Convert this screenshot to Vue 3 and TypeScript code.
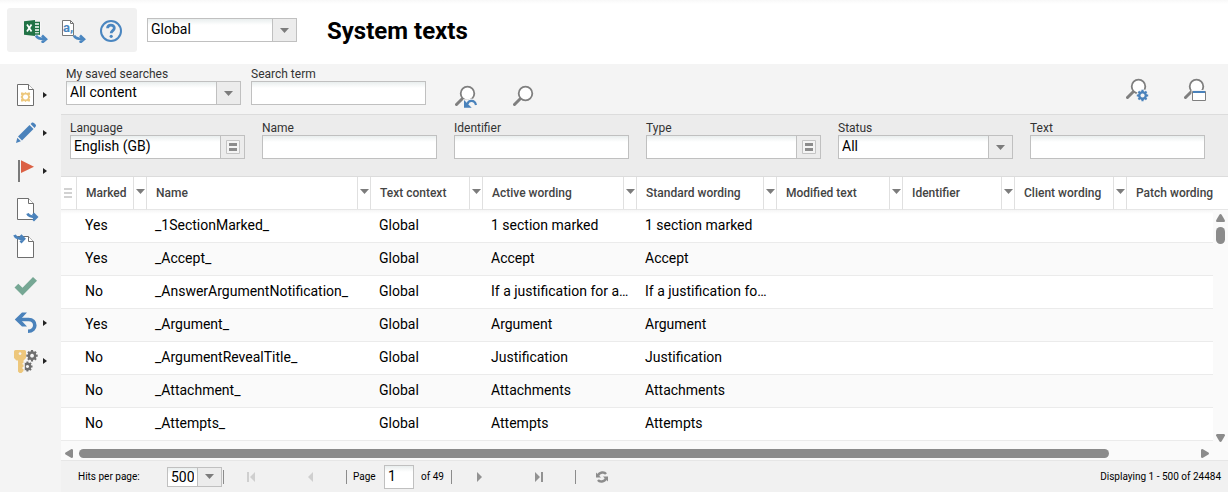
<script setup lang="ts">
import { ref } from 'vue'

interface Column { label: string; width: string; menu: boolean }
interface Row { marked: string; name: string; context: string; active: string; standard: string }
interface Filter { id: string; label: string; kind: 'text' | 'list' | 'select'; value: string }
interface Tool { icon: string; label: string; menu: boolean }

const columns: Column[] = [
  { label: 'Marked', width: 'w70', menu: true },
  { label: 'Name', width: 'w224', menu: true },
  { label: 'Text context', width: 'w112', menu: true },
  { label: 'Active wording', width: 'w154', menu: true },
  { label: 'Standard wording', width: 'w140', menu: true },
  { label: 'Modified text', width: 'w126', menu: true },
  { label: 'Identifier', width: 'w112', menu: true },
  { label: 'Client wording', width: 'w112', menu: true },
  { label: 'Patch wording', width: 'rest', menu: false },
]

const rows: Row[] = [
  { marked: 'Yes', name: '_1SectionMarked_', context: 'Global', active: '1 section marked', standard: '1 section marked' },
  { marked: 'Yes', name: '_Accept_', context: 'Global', active: 'Accept', standard: 'Accept' },
  { marked: 'No', name: '_AnswerArgumentNotification_', context: 'Global', active: 'If a justification for a…', standard: 'If a justification fo…' },
  { marked: 'Yes', name: '_Argument_', context: 'Global', active: 'Argument', standard: 'Argument' },
  { marked: 'No', name: '_ArgumentRevealTitle_', context: 'Global', active: 'Justification', standard: 'Justification' },
  { marked: 'No', name: '_Attachment_', context: 'Global', active: 'Attachments', standard: 'Attachments' },
  { marked: 'No', name: '_Attempts_', context: 'Global', active: 'Attempts', standard: 'Attempts' },
]

const filters = ref<Filter[]>([
  { id: 'language', label: 'Language', kind: 'list', value: 'English (GB)' },
  { id: 'name', label: 'Name', kind: 'text', value: '' },
  { id: 'identifier', label: 'Identifier', kind: 'text', value: '' },
  { id: 'type', label: 'Type', kind: 'list', value: '' },
  { id: 'status', label: 'Status', kind: 'select', value: 'All' },
  { id: 'text', label: 'Text', kind: 'text', value: '' },
])

const tools: Tool[] = [
  { icon: 'new', label: 'New', menu: true },
  { icon: 'edit', label: 'Edit', menu: true },
  { icon: 'flag', label: 'Mark', menu: true },
  { icon: 'export', label: 'Export', menu: false },
  { icon: 'import', label: 'Import', menu: false },
  { icon: 'check', label: 'Apply', menu: false },
  { icon: 'undo', label: 'Undo', menu: true },
  { icon: 'keys', label: 'Permissions', menu: true },
]

const searchTerm = ref('')
const page = ref('1')

// Outline of a cog wheel with square teeth around (cx, cy).
function cog(cx: number, cy: number, outer: number, inner: number, teeth = 8): string {
  const step = (Math.PI * 2) / teeth
  const points: string[] = []
  for (let i = 0; i < teeth; i++) {
    const a = i * step
    const corners: [number, number][] = [[inner, -0.3], [outer, -0.24], [outer, 0.24], [inner, 0.3]]
    for (const [r, k] of corners) {
      points.push(`${(cx + r * Math.cos(a + k * step)).toFixed(2)} ${(cy + r * Math.sin(a + k * step)).toFixed(2)}`)
    }
  }
  return `M${points.join('L')}Z`
}
</script>

<template>
  <div class="page">
    <header class="top">
      <div class="actions">
        <button type="button" class="icon-btn" aria-label="Export to Excel">
          <svg viewBox="0 0 24 24">
            <path d="M10 3H16.5V15.5H10Z" fill="#fff" />
            <path d="M11 3.5H16M11 6.5H16M11 9.5H16M11 12.5H16M11 15H16" stroke="#217346" stroke-width="1.6" />
            <path d="M15.5 3V15.5" stroke="#217346" />
            <path d="M0 2.2L11 1V17L0 15.8Z" fill="#217346" />
            <path d="M3 5.5L7.5 12.5M7.5 5.5L3 12.5" stroke="#fff" stroke-width="1.7" />
            <path d="M12 16.5C13 19.5 16 20.2 22 20.2M18 16.5L22 20.2L17.8 23.8" fill="none" stroke="#4a86c0" stroke-width="2.6" />
          </svg>
        </button>
        <button type="button" class="icon-btn" aria-label="Export as CSV">
          <svg viewBox="0 0 24 24">
            <path d="M.5 1.5H8.5L11.5 4.5V16.5H.5Z" fill="#fff" stroke="#777" />
            <path d="M8.5 1.5V4.5H11.5" fill="none" stroke="#777" />
            <text x="1" y="13" font-family="Roboto, sans-serif" font-size="13" font-weight="700" fill="#4a86c0">a,</text>
            <path d="M12 16.5C13 19.5 16 20.2 22 20.2M18 16.5L22 20.2L17.8 23.8" fill="none" stroke="#4a86c0" stroke-width="2.6" />
          </svg>
        </button>
        <button type="button" class="icon-btn" aria-label="Help">
          <svg viewBox="0 0 24 24">
            <circle cx="11" cy="12" r="10" fill="none" stroke="#4a86c0" stroke-width="2" />
            <path d="M7.6 9.3C7.6 5 14.3 5.2 14.3 9C14.3 11.6 11.2 11.6 11.2 14.3" fill="none" stroke="#4a86c0" stroke-width="2.8" />
            <circle cx="11.2" cy="17.3" r="1.6" fill="#4a86c0" />
          </svg>
        </button>
      </div>
      <div class="control scope">
        <select aria-label="Text context"><option>Global</option></select>
        <span class="end"><svg class="tri" viewBox="0 0 9 5"><path d="M0 0H9L4.5 5Z" /></svg></span>
      </div>
      <h1>System texts</h1>
    </header>

    <div class="body">
      <nav class="side" aria-label="Tools">
        <button v-for="t in tools" :key="t.icon" type="button" class="tool" :aria-label="t.label">
          <svg class="tool-icon" viewBox="0 0 24 24">
            <template v-if="t.icon === 'new' || t.icon === 'export' || t.icon === 'import'">
              <path d="M3.5 1.5H14.5L19.5 6.5V22.5H3.5Z" fill="#fff" stroke="#6e6e6e" />
              <path d="M14.5 1.5V6.5H19.5" fill="#fff" stroke="#6e6e6e" />
            </template>
            <path
              v-if="t.icon === 'new'"
              fill-rule="evenodd"
              d="M7 9.5H9L10 10.2L11.5 9L13 10.2L14 9.5H16V11.5L15.3 12.5L16.5 14L15.3 15.5L16 16.5V18.5H14L13 17.8L11.5 19L10 17.8L9 18.5H7V16.5L7.7 15.5L6.5 14L7.7 12.5L7 11.5ZM11.5 11.4A2.6 2.6 0 1 0 11.6 11.4Z"
              fill="#edc77c"
            />
            <path v-if="t.icon === 'export'" d="M13.5 16.5C14.5 19 17 20 22.5 20M19 16.5L22.5 20L19 23.5" fill="none" stroke="#4a82bb" stroke-width="2.8" />
            <path v-if="t.icon === 'import'" d="M.5 0C1.5 2.5 4 3.8 10 3.8M6.5 .2L10 3.8L6.5 7.5" fill="none" stroke="#4a82bb" stroke-width="2.8" />
            <g v-if="t.icon === 'edit'" fill="#4a82bb">
              <path d="M4 15.5L15.5 4L19.5 8L8 19.5Z" />
              <path d="M16.6 3L18 1.6Q19 1 20 2L21.6 3.6Q22.4 4.6 21.7 5.6L20.5 6.9Z" />
              <path d="M3.3 16.8L6.9 20.3L2 22Z" />
            </g>
            <g v-if="t.icon === 'flag'">
              <path d="M4 1H6V23H4Z" fill="#7a7a7a" />
              <path d="M7 1.2L20 7.8L7 14Z" fill="#db6044" />
            </g>
            <path v-if="t.icon === 'check'" d="M.5 14.5L4.3 10.7L8.5 14.8L19 4L23 7.8L8.5 22.5Z" fill="#76a794" />
            <g v-if="t.icon === 'undo'">
              <path d="M4 8.5H14.5C23 8.5 23 20.3 14 20.3" fill="none" stroke="#4a82bb" stroke-width="3.6" />
              <path d="M.8 8.5L8 1.5H13L6.4 8.5L13 15.5H8Z" fill="#4a82bb" />
            </g>
            <g v-if="t.icon === 'keys'">
              <path fill-rule="evenodd" :d="cog(18, 6.7, 5.8, 4.5) + 'M18 4.8A1.9 1.9 0 1 0 18.1 4.8Z'" fill="#6e6e6e" />
              <path fill-rule="evenodd" :d="cog(13.4, 17.5, 5.2, 4) + 'M13.4 15.9A1.6 1.6 0 1 0 13.5 15.9Z'" fill="#6e6e6e" />
              <path d="M8 11.5H10.8V24H8Z" fill="#f4f4f4" />
              <path fill-rule="evenodd" fill="#edc77c" d="M1.5 1H10.5Q12 1 12 2.5V9L9.5 11.5V14H8.5V15.5H9.5V18H8.5V20H9.5V22L7.5 24H5.5L4 22.5V11.5H2.5L0 9V2.5Q0 1 1.5 1ZM6 3.2A1.4 1.4 0 1 0 6.1 3.2Z" />
            </g>
          </svg>
          <svg v-if="t.menu" class="more" viewBox="0 0 4 6"><path d="M0 0L4 3L0 6Z" fill="#222" /></svg>
        </button>
      </nav>

      <main class="main">
        <form class="search" @submit.prevent>
          <div class="field">
            <label for="saved">My saved searches</label>
            <div class="control">
              <select id="saved"><option>All content</option></select>
              <span class="end"><svg class="tri" viewBox="0 0 9 5"><path d="M0 0H9L4.5 5Z" /></svg></span>
            </div>
          </div>
          <div class="field">
            <label for="term">Search term</label>
            <div class="control"><input id="term" v-model="searchTerm" type="text"></div>
          </div>
          <div class="search-actions run">
            <button type="button" class="icon-btn" aria-label="Reset search">
              <svg viewBox="0 0 24 24">
                <path d="M7.5 13.5L1.5 19.5" stroke="#7f7f7f" stroke-width="3" stroke-linecap="round" />
                <circle cx="12.5" cy="8.5" r="6.8" fill="#fff" stroke="#7f7f7f" stroke-width="1.8" />
                <path d="M8.2 14.2H13.5C17 12.5 20 14 22.5 19V23H8.2Z" fill="#f4f4f4" />
                <path d="M12.5 19C13.5 15 19.5 14.5 21 20" fill="none" stroke="#4a82bb" stroke-width="2.2" />
                <path d="M9 15V22.7H16.7Z" fill="#4a82bb" />
              </svg>
            </button>
            <button type="submit" class="icon-btn" aria-label="Search">
              <svg viewBox="0 0 24 24">
                <path d="M7.5 13.5L1.5 19.5" stroke="#7f7f7f" stroke-width="3" stroke-linecap="round" />
                <circle cx="12.5" cy="8.5" r="6.8" fill="#fff" stroke="#7f7f7f" stroke-width="1.8" />
              </svg>
            </button>
          </div>
          <div class="search-actions setup">
            <button type="button" class="icon-btn" aria-label="Search settings">
              <svg viewBox="0 0 24 24">
                <path d="M7.5 13.5L1.5 19.5" stroke="#7f7f7f" stroke-width="3" stroke-linecap="round" />
                <circle cx="12.5" cy="8.5" r="6.8" fill="#fff" stroke="#7f7f7f" stroke-width="1.8" />
                <circle cx="16.5" cy="17.5" r="6.2" fill="#f4f4f4" />
                <path fill-rule="evenodd" :d="cog(16.5, 17.5, 5.8, 4.5) + 'M16.5 15.4A2.1 2.1 0 1 0 16.6 15.4Z'" fill="#4a82bb" />
              </svg>
            </button>
            <button type="button" class="icon-btn" aria-label="Search window">
              <svg viewBox="0 0 24 24">
                <path d="M7.5 13.5L1.5 19.5" stroke="#7f7f7f" stroke-width="3" stroke-linecap="round" />
                <circle cx="12.5" cy="8.5" r="6.8" fill="#fff" stroke="#7f7f7f" stroke-width="1.8" />
                <path d="M7.5 12H23V23H7.5Z" fill="#f4f4f4" />
                <path d="M8.5 13.5H21.5V22.5H8.5Z" fill="#fff" stroke="#7f7f7f" />
                <path d="M9 14H21" stroke="#4a82bb" stroke-width="2" />
              </svg>
            </button>
          </div>
        </form>

        <div class="filters">
          <div v-for="f in filters" :key="f.id" class="field">
            <label :for="f.id">{{ f.label }}</label>
            <div class="control">
              <select v-if="f.kind === 'select'" :id="f.id"><option>{{ f.value }}</option></select>
              <input v-else :id="f.id" v-model="f.value" type="text">
              <span v-if="f.kind === 'select'" class="end"><svg class="tri" viewBox="0 0 9 5"><path d="M0 0H9L4.5 5Z" /></svg></span>
              <button v-if="f.kind === 'list'" type="button" class="end pick" :aria-label="'Choose ' + f.label">
                <svg viewBox="0 0 14 14">
                  <path d="M.5 .5H13.5V13.5H.5Z" fill="#f4f4f4" stroke="#c4c4c4" />
                  <path d="M3 3H11V6H3ZM3 8H11V11H3Z" fill="#8c8c8c" />
                </svg>
              </button>
            </div>
          </div>
        </div>

        <div class="grid">
          <table>
            <colgroup>
              <col class="w16">
              <col v-for="c in columns" :key="c.label" :class="c.width">
            </colgroup>
            <thead>
              <tr>
                <th class="grip">
                  <button type="button" aria-label="Columns">
                    <svg viewBox="0 0 8 10"><path d="M0 1H8M0 5H8M0 9H8" stroke="#d2d2d2" stroke-width="2" /></svg>
                  </button>
                </th>
                <th v-for="c in columns" :key="c.label" scope="col" :class="{ last: !c.menu }">
                  <div class="head">
                    <span>{{ c.label }}</span>
                    <button v-if="c.menu" type="button" :aria-label="c.label + ' menu'">
                      <svg class="tri" viewBox="0 0 9 5"><path d="M0 0H9L4.5 5Z" /></svg>
                    </button>
                  </div>
                </th>
              </tr>
            </thead>
            <tbody>
              <tr v-for="r in rows" :key="r.name">
                <td></td>
                <td>{{ r.marked }}</td>
                <td>{{ r.name }}</td>
                <td>{{ r.context }}</td>
                <td>{{ r.active }}</td>
                <td>{{ r.standard }}</td>
                <td></td>
                <td></td>
                <td></td>
                <td></td>
              </tr>
            </tbody>
          </table>
          <div class="vbar" aria-hidden="true">
            <svg viewBox="0 0 9 8"><path d="M4.5 0Q5.2 0 5.8 1L9 6.5Q9 8 8 8H1Q0 8 0 6.5L3.2 1Q3.8 0 4.5 0Z" /></svg>
            <span class="vthumb"></span>
            <svg class="down" viewBox="0 0 9 8"><path d="M4.5 8Q5.2 8 5.8 7L9 1.5Q9 0 8 0H1Q0 0 0 1.5L3.2 7Q3.8 8 4.5 8Z" /></svg>
          </div>
        </div>
        <div class="hbar" aria-hidden="true">
          <svg viewBox="0 0 8 9"><path d="M0 4.5Q0 3.8 1 3.2L6.5 0Q8 0 8 1V8Q8 9 6.5 9L1 5.8Q0 5.2 0 4.5Z" /></svg>
          <span class="track"><span class="hthumb"></span></span>
          <svg viewBox="0 0 8 9"><path d="M8 4.5Q8 3.8 7 3.2L1.5 0Q0 0 0 1V8Q0 9 1.5 9L7 5.8Q8 5.2 8 4.5Z" /></svg>
        </div>

        <footer class="pager">
          <label class="hits" for="hits">Hits per page:</label>
          <div class="control small">
            <select id="hits"><option>500</option></select>
            <span class="end"><svg class="tri" viewBox="0 0 9 5"><path d="M0 0H9L4.5 5Z" /></svg></span>
          </div>
          <span class="bar"></span>
          <div class="pair">
            <button type="button" class="step" disabled aria-label="First page">
              <svg viewBox="0 0 10 10"><path d="M1 0H3V10H1ZM9 0V10L4 5Z" fill="#cfcfcf" /></svg>
            </button>
            <button type="button" class="step" disabled aria-label="Previous page">
              <svg viewBox="0 0 10 10"><path d="M7 0V10L2 5Z" fill="#cfcfcf" /></svg>
            </button>
          </div>
          <span class="bar"></span>
          <label class="page-label" for="page">Page</label>
          <div class="control number"><input id="page" v-model="page" type="text"></div>
          <span class="of">of 49</span>
          <span class="bar"></span>
          <div class="pair next">
            <button type="button" class="step" aria-label="Next page">
              <svg viewBox="0 0 10 10"><path d="M2 0V10L7 5Z" fill="#929292" /></svg>
            </button>
            <button type="button" class="step" aria-label="Last page">
              <svg viewBox="0 0 10 10"><path d="M1 0V10L6 5ZM7 0H9V10H7Z" fill="#929292" /></svg>
            </button>
          </div>
          <span class="bar"></span>
          <button type="button" class="reload" aria-label="Refresh">
            <svg viewBox="0 0 12 12">
              <path d="M2 4.5C3.5 .8 8.5 .8 10 3M10 7.5C8.5 11.2 3.5 11.2 2 9" fill="none" stroke="#8c8c8c" stroke-width="2.4" />
              <path d="M0 1.5V6.5H5ZM12 10.5V5.5H7Z" fill="#8c8c8c" />
            </svg>
          </button>
          <span class="status">Displaying 1 - 500 of 24484</span>
        </footer>
      </main>
    </div>
  </div>
</template>

<style>
html, body { background: #f4f4f4; }
</style>

<style scoped>
.page, .page * { box-sizing: border-box; }
.page {
  display: flex;
  flex-direction: column;
  min-height: 100vh;
  font-family: Roboto, "Liberation Sans", sans-serif;
  font-size: 14px;
  color: #000;
}
button, input, select { font: inherit; color: inherit; margin: 0; padding: 0; border: 0; background: none; border-radius: 0; }
button { display: flex; align-items: center; justify-content: center; }
svg { display: block; flex: none; }

.top {
  display: flex;
  align-items: center;
  height: 64px;
  padding: 0 7px 4px;
  background: linear-gradient(#f8f8f8, #fff 4px);
}
.actions { display: flex; gap: 14px; padding: 11px 13px 9px 17px; background: #f1f1f1; border-radius: 3px; }
.icon-btn, .icon-btn svg { width: 24px; height: 24px; }
.scope { margin: 0 30px 0 10px; width: 150px; }
h1 { margin: 0; padding-top: 2px; font-size: 24px; line-height: 32px; font-weight: 700; }

.control {
  display: flex;
  height: 24px;
  border: 1px solid #c0c0c0;
  background: linear-gradient(#e9eeee, #fff 6px);
}
.control input, .control select {
  flex: 1;
  min-width: 0;
  width: 100%;
  height: 20px;
  padding: 0 3px;
  line-height: 20px;
  appearance: none;
  outline: none;
}
.end {
  display: flex;
  align-items: center;
  justify-content: center;
  width: 24px;
  border-left: 1px solid #c0c0c0;
  background: #ececec;
  pointer-events: none;
}
.pick { pointer-events: auto; }
.pick svg { width: 14px; height: 14px; }
.tri { width: 9px; height: 5px; fill: #7c7c7c; }

.body { display: flex; flex: 1; background: #f4f4f4; }
.side { width: 61px; flex: none; padding-top: 12px; }
.tool { justify-content: flex-start; width: 61px; height: 38px; padding-left: 14px; gap: 5px; }
.tool-icon { width: 24px; height: 24px; overflow: visible; }
.more { width: 4px; height: 6px; }

.main { flex: 1; min-width: 0; display: flex; flex-direction: column; }
.search { display: flex; align-items: flex-start; height: 50px; padding: 2px 20px 0 5px; gap: 10px; }
.field { width: 175px; flex: none; }
.field label { display: block; height: 15px; font-size: 12px; line-height: 17px; color: #333; }
.search-actions { display: flex; gap: 34px; }
.run { margin: 19px 0 0 19px; }
.setup { margin: 12px 0 0 auto; }
.filters {
  display: flex;
  gap: 17px;
  padding: 5px 9px 17px;
  background: #ececec;
  border-top: 1px solid #dcdcdc;
  border-bottom: 1px solid #dcdcdc;
  overflow: hidden;
}

.grid { display: grid; grid-template-columns: minmax(0, 1fr) 15px; background: #fafafa; padding-bottom: 4px; }
table { grid-row: 1; grid-column: 1 / -1; width: 100%; table-layout: fixed; border-collapse: separate; border-spacing: 0; align-self: start; }
.w16 { width: 16px; }
.w70 { width: 70px; }
.w112 { width: 112px; }
.w126 { width: 126px; }
.w140 { width: 140px; }
.w154 { width: 154px; }
.w224 { width: 224px; }
.rest { width: auto; }
th {
  height: 33px;
  padding: 0;
  background: #fff;
  border-right: 1px solid #e0e0e0;
  border-bottom: 1px solid #e6e6e6;
  font-size: 12px;
  font-weight: 500;
  color: #444;
  text-align: left;
}
th.last { border-right: 0; }
.grip button { width: 14px; height: 32px; }
.grip svg { width: 8px; height: 10px; }
.head { display: flex; height: 32px; line-height: 32px; }
.head span { flex: 1; min-width: 0; padding-left: 9px; white-space: nowrap; }
.head button { width: 13px; border-left: 1px solid #e0e0e0; padding-bottom: 3px; }
td {
  height: 33px;
  padding: 0 0 2px 8px;
  border-bottom: 1px solid #ebebeb;
  background: #fff;
  white-space: nowrap;
  overflow: hidden;
  text-overflow: ellipsis;
}
tbody tr:first-child td { background: linear-gradient(#f5f5f5, #fff 4px); }
tbody tr:nth-child(even) td { background: #fafafa; }

.vbar {
  grid-row: 1;
  grid-column: 2;
  z-index: 1;
  display: flex;
  flex-direction: column;
  align-items: center;
  gap: 5px;
  margin: 33px 0 -4px;
  padding: 4px 0 3px;
  background: #fafafa;
  fill: #8b8b8b;
}
.vbar svg { width: 9px; height: 8px; }
.vthumb { width: 9px; height: 17px; border-radius: 5px; background: #8b8b8b; }
.down { margin-top: auto; }
.hbar {
  display: flex;
  align-items: center;
  gap: 6px;
  height: 16px;
  padding: 2px 19px 0 4px;
  background: #fafafa;
  border-bottom: 1px solid #e6e6e6;
  fill: #8b8b8b;
}
.hbar svg { width: 8px; height: 9px; }
.track { flex: 1; padding-right: 86px; }
.hthumb { display: block; height: 9px; border-radius: 5px; background: #8b8b8b; }

.pager { display: flex; align-items: center; height: 31px; padding: 0 7px 0 17px; background: #f1f1f1; font-size: 10px; white-space: nowrap; }
.hits { width: 89px; }
.small { width: 55px; height: 20px; margin-right: 1px; }
.small select { height: 18px; line-height: 18px; font-size: 14px; }
.bar { width: 1px; height: 14px; background: #8c8c8c; }
.pair { display: flex; gap: 50px; padding: 0 30px 0 22px; }
.step, .step svg { width: 10px; height: 10px; }
.page-label { width: 37px; padding-left: 6px; }
.number { width: 30px; }
.number input { font-size: 14px; }
.of { width: 37px; padding-left: 7px; }
.next { gap: 49px; padding: 0 31px 0 23px; }
.reload { margin-left: 20px; }
.reload svg { width: 12px; height: 12px; }
.status { margin-left: auto; }
</style>
